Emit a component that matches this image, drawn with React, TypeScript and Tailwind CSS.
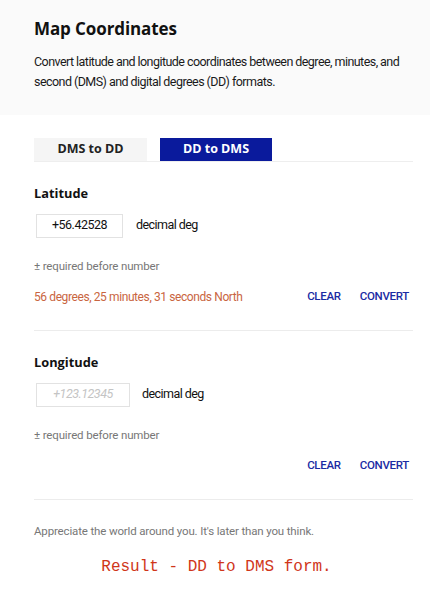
import React from 'react';

const heading = { fontFamily: '"Open Sans", sans-serif' };
const body = { fontFamily: 'Roboto, sans-serif' };

interface CoordSectionProps {
  title: string;
  value?: string;
  placeholder?: string;
  inputWidth: string;
  unitGap: string;
  result?: string;
}

const CoordSection: React.FC<CoordSectionProps> = ({ title, value, placeholder, inputWidth, unitGap, result }) => (
  <div className="border-b border-[#ececec] pb-[25px]">
    <h2 className="text-[12.8px] font-bold text-[#111] leading-none" style={heading}>{title}</h2>
    <div className={`mt-[14px] flex items-center ${unitGap}`}>
      <div className={`${inputWidth} ml-[2px] h-[24px] border border-[#e2e2e2] flex items-center justify-center text-[12.5px] tracking-[-0.5px]`}>
        {value ? (
          <span className="text-[#111]">{value}</span>
        ) : (
          <span className="italic text-[#c4c4c4]">{placeholder}</span>
        )}
      </div>
      <span className="text-[12.5px] tracking-[-0.55px] text-[#111]">decimal deg</span>
    </div>
    <p className="mt-[20px] text-[11.5px] tracking-[-0.15px] text-[#777]">± required before number</p>
    <div className="mt-[14px] flex items-center h-[16px]">
      <span className="flex-1 text-[12px] tracking-[-0.4px] text-[#c9653f]">{result}</span>
      <button className="text-[11.5px] font-medium tracking-[-0.3px] text-[#1a2ba3] mr-[19px]">CLEAR</button>
      <button className="text-[11.5px] font-medium tracking-[-0.3px] text-[#1a2ba3] mr-[4px]">CONVERT</button>
    </div>
  </div>
);

export default function App() {
  return (
    <div className="w-[430px] h-[600px] bg-white overflow-hidden" style={body}>
      <div className="bg-[#fafafa] h-[115px] pl-[34px] pr-[8px] pt-[18px]">
        <h1 className="text-[17px] font-bold text-[#111] leading-tight tracking-[-0.1px]" style={heading}>Map Coordinates</h1>
        <p className="mt-[13px] text-[12.5px] leading-[20px] tracking-[-0.55px] text-[#1a1a1a]">
          Convert latitude and longitude coordinates between degree, minutes, and second (DMS) and digital degrees (DD) formats.
        </p>
      </div>

      <div className="pl-[34px] pr-[17px]">
        <div className="mt-[23px] flex gap-[13px] border-b border-[#eeeeee]">
          <div className="w-[113px] h-[23px] bg-[#f5f5f5] flex items-center justify-center text-[12.5px] font-bold text-[#222]" style={heading}>DMS to DD</div>
          <div className="w-[112px] h-[23px] bg-[#0a1a9c] flex items-center justify-center text-[12.5px] font-bold text-white" style={heading}>DD to DMS</div>
        </div>

        <div className="pt-[25px]">
          <CoordSection
            title="Latitude"
            value="+56.42528"
            inputWidth="w-[87px]"
            unitGap="gap-[13px]"
            result="56 degrees, 25 minutes, 31 seconds North"
          />
        </div>

        <div className="pt-[25px]">
          <CoordSection
            title="Longitude"
            placeholder="+123.12345"
            inputWidth="w-[94px]"
            unitGap="gap-[12px]"
          />
        </div>

        <p className="mt-[23px] text-[11.5px] tracking-[-0.15px] text-[#777]">Appreciate the world around you. It's later than you think.</p>
        <p className="mt-[15px] text-center text-[16px] text-[#d0361a] pr-[14px]" style={{ fontFamily: '"Liberation Mono", monospace' }}>
          Result - DD to DMS form.
        </p>
      </div>
    </div>
  );
}
